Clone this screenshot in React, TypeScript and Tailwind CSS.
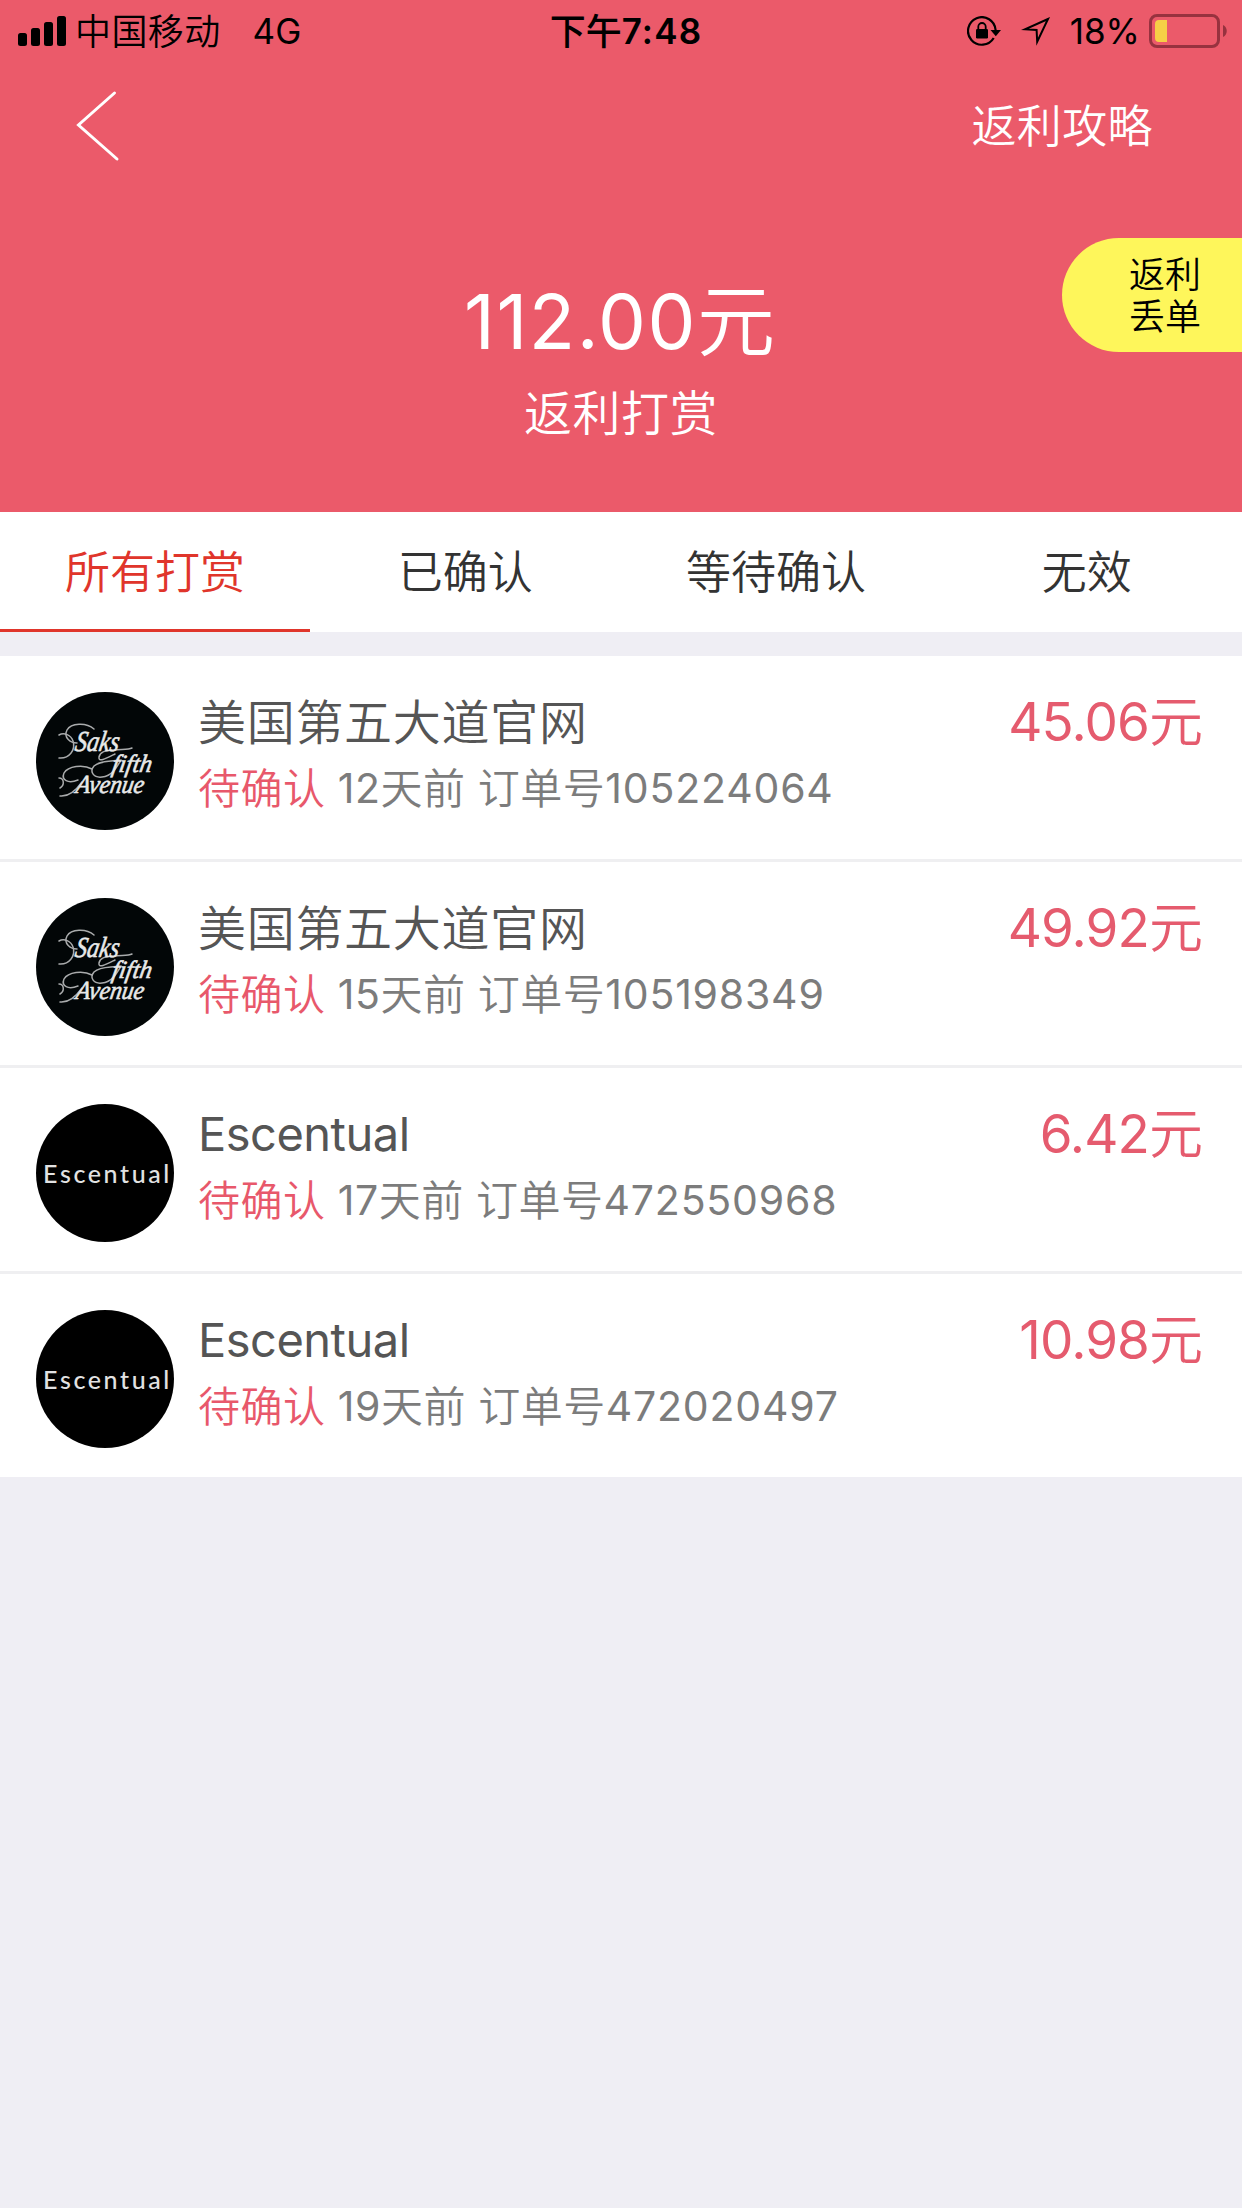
import React from 'react'

type Order = {
  shop: string
  logo: 'saks' | 'escentual'
  days: number
  orderNo: string
  amount: string
}

const tabs = ['所有打赏', '已确认', '等待确认', '无效']

const orders: Order[] = [
  {shop: '美国第五大道官网', logo: 'saks', days: 12, orderNo: '105224064', amount: '45.06'},
  {shop: '美国第五大道官网', logo: 'saks', days: 15, orderNo: '105198349', amount: '49.92'},
  {shop: 'Escentual', logo: 'escentual', days: 17, orderNo: '472550968', amount: '6.42'},
  {shop: 'Escentual', logo: 'escentual', days: 19, orderNo: '472020497', amount: '10.98'},
]

const SaksLogo = () => (
  <svg viewBox="0 0 138 138" className="size-[138px] shrink-0">
    <circle cx="69" cy="69" r="69" fill="#020607" />
    <g fill="none" stroke="#a9abac" strokeWidth="1.5" strokeLinecap="round">
      <path d="M23 43c5-3 12 0 14 6 3 9-4 18-14 17" />
      <path d="M58 37c-8-7-23-6-27 1-4 8 4 13 10 13" />
      <path d="M79 62c-8 4-17 9-16 3 1-5 8-7 15-7 7-1 14 0 18-2" />
      <path d="M84 68c-9 2-19 0-26 6-5 6 0 12 8 11 10-1 15-10 19-17" />
      <path d="M56 77c-9-5-24-3-28 4-3 7 4 11 14 7" />
      <path d="M23 86c5 0 6 7 1 10M24 104c9 1 17-7 22-14" />
    </g>
    <g fill="#e8e9e9" stroke="#e8e9e9" strokeWidth="0.6" fontFamily="'Liberation Serif', serif" fontStyle="italic">
      <text transform="translate(38 59) skewX(-10)" fontSize="29" textLength="44" lengthAdjust="spacingAndGlyphs">Saks</text>
      <text transform="translate(75 79.500) skewX(-10)" fontSize="25" textLength="40" lengthAdjust="spacingAndGlyphs">fifth</text>
      <text transform="translate(39 101) skewX(-10)" fontSize="26" textLength="68" lengthAdjust="spacingAndGlyphs">Avenue</text>
    </g>
  </svg>
)

const EscentualLogo = () => (
  <div className="flex size-[138px] shrink-0 items-center justify-center rounded-full bg-black pt-px pl-[5px]">
    <span className="font-['Lato',sans-serif] text-[25px] leading-none font-medium tracking-[2.6px] text-[#e2e2e2]">Escentual</span>
  </div>
)

const StatusBar = () => (
  <div className="flex h-[60px] items-center pt-[2px] pr-[15px] pl-[18px] text-[36px] leading-[58px] text-black">
    <div className="flex flex-1 items-center">
      <svg viewBox="0 0 48 30" className="mr-[9px] h-[30px] w-[48px]">
        <rect x="0" y="17" width="9" height="13" rx="2.5" />
        <rect x="13" y="12" width="9" height="18" rx="2.5" />
        <rect x="26" y="6" width="9" height="24" rx="2.5" />
        <rect x="39" y="0" width="9" height="30" rx="2.5" />
      </svg>
      <span className="pt-[2px] font-[350] tracking-[0.4px]">中国移动</span>
      <span className="ml-[32px] text-[35px]">4G</span>
    </div>
    <div className="pt-px pl-[7px] font-medium">
      下午<span className="align-[1px] text-[35px] font-semibold tracking-[1.2px]">7:48</span>
    </div>
    <div className="flex flex-1 items-center justify-end">
      {/* rotation lock */}
      <svg viewBox="0 0 34 30" className="mr-[20px] h-[30px] w-[34px]">
        <path d="M26.7 22A13.8 13.8 0 1 1 28.6 14" fill="none" stroke="#000" strokeWidth="2.2" />
        <path d="M23.5 14h10.5l-5.2 6.2z" />
        <rect x="9" y="13" width="12" height="9.5" rx="1.2" />
        <path d="M11.3 14v-3.300a3.700 3.700 0 0 1 7.400 0V14" fill="none" stroke="#000" strokeWidth="1.8" />
      </svg>
      {/* location arrow */}
      <svg viewBox="0 0 30 30" className="mr-[19px] h-[30px] w-[30px]">
        <path d="M27 3L4 13.300l11.600 0.700l0.600 11.700z" fill="none" stroke="#000" strokeWidth="2" strokeMiterlimit="10" />
      </svg>
      <span className="mr-[9px] text-[35px]">18%</span>
      <svg viewBox="0 0 78 34" className="h-[34px] w-[78px]">
        <rect x="1.500" y="1.500" width="68" height="31" rx="6.500" fill="none" stroke="#97323f" strokeWidth="3" />
        <path d="M18 6v22H10a4 4 0 0 1-4-4V10a4 4 0 0 1 4-4z" fill="#f6cf46" />
        <path d="M74 11c5 2 5 10 0 12z" fill="#97323f" />
      </svg>
    </div>
  </div>
)

const OrderRow = ({order}: {order: Order}) => (
  <li className="flex h-[206px] border-b-[3px] border-[#efeff1] bg-white pt-[33px] pr-[39px] pl-[36px] last:h-[203px] last:border-b-0">
    <div className="mt-[3px] mr-[24px]">
      {order.logo === 'saks' ? <SaksLogo /> : <EscentualLogo />}
    </div>

    <div className="flex-1 leading-[66px]">
      <h2 className="h-[66px] text-[48px] text-[#555]">
        {order.logo === 'saks' ? (
          <span className="align-[-1px] font-[350] tracking-[0.7px]">{order.shop}</span>
        ) : (
          <span className="text-[47px] tracking-[-0.5px]">{order.shop}</span>
        )}
      </h2>
      <p className="h-[66px] text-[42px] font-[350] tracking-[0.5px] text-[#7c7c7c]">
        <span className="text-[#e8586b]">待确认</span>{' '}
        <span className="align-[1px] text-[41px] font-normal">{order.days}</span>天前 订单号
        <span className="align-[1px] text-[41px] font-normal tracking-[0.8px]">{order.orderNo}</span>
      </p>
    </div>

    <div className="h-[66px] text-[54px] leading-[66px] text-[#e55b6e]">
      <span className="align-[1px] text-[53px] tracking-[-0.9px]">{order.amount}</span>
      <span className="font-[350]">元</span>
    </div>
  </li>
)

const App = () => {
  return (
    <main className="min-h-[2208px] w-[1242px] bg-[#efeef4] font-['Inter','Noto_Sans_CJK_SC',sans-serif]">
      <header className="relative h-[512px] bg-[#eb5a6a]">
        <StatusBar />

        <nav className="flex h-[132px] items-center justify-between pr-[89px] pl-[76px] text-white">
          <svg viewBox="0 0 44 72" className="h-[72px] w-[44px]">
            <path d="M38.500 3L2.500 35L41 69" fill="none" stroke="#fff" strokeWidth="3" strokeLinecap="round" />
          </svg>
          <a className="pt-[2px] text-[45px] font-[350] tracking-[0.4px]">返利攻略</a>
        </nav>

        <div className="mt-[79px] text-center text-white">
          <p className="h-[100px] pr-[3px] text-[78px] leading-[100px]">
            <span className="align-[1px] text-[76px] tracking-[1.5px]">112.00</span>
            <span className="font-[350]">元</span>
          </p>
          <p className="text-[48px] leading-[86px] font-[350] tracking-[0.5px]">返利打赏</p>
        </div>

        <button className="absolute top-[238px] right-0 h-[114px] w-[180px] rounded-l-full bg-[#fef65b] pt-[2px] pl-[26px] text-[36px] leading-[42px] font-[350] text-black">
          返利<br />丢单
        </button>
      </header>

      <div className="flex h-[120px] bg-white text-[45px] font-[350] text-[#333]">
        {tabs.map((tab, i) => (
          <div
            key={tab}
            className={
              i === 0
                ? 'flex w-[310px] items-center justify-center border-b-[3px] border-[#e0352b] pt-[4px] text-[#e0352b]'
                : 'flex flex-1 items-center justify-center border-b-[3px] border-transparent pt-[4px]'
            }
          >
            {tab}
          </div>
        ))}
      </div>

      <ul className="mt-[24px]">
        {orders.map((order) => (
          <OrderRow key={order.orderNo} order={order} />
        ))}
      </ul>
    </main>
  )
}

export default App
